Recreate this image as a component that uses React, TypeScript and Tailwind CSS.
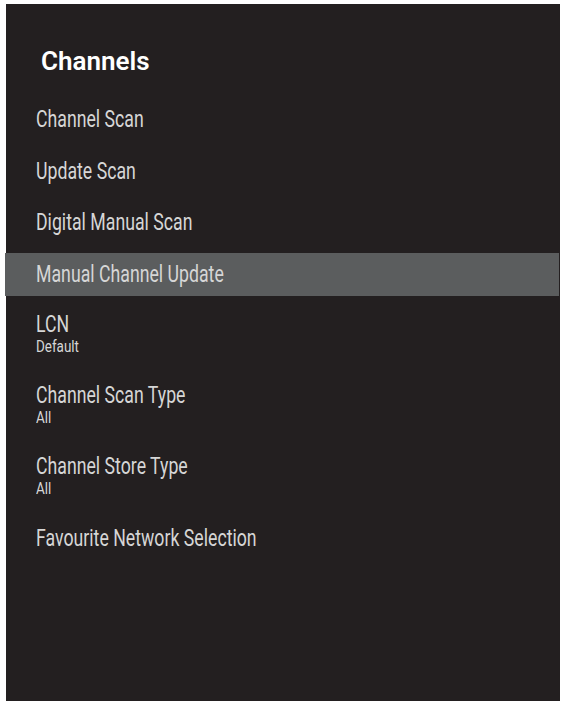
import React from 'react'

type Item = { label: string; value?: string }

const items: Item[] = [
  { label: 'Channel Scan' },
  { label: 'Update Scan' },
  { label: 'Digital Manual Scan' },
  { label: 'Manual Channel Update' },
  { label: 'LCN', value: 'Default' },
  { label: 'Channel Scan Type', value: 'All' },
  { label: 'Channel Store Type', value: 'All' },
  { label: 'Favourite Network Selection' },
]

const SELECTED = 3

// 細身の書体が無いので Roboto を横方向に縮める
const Label = ({ children, small }: { children: React.ReactNode; small?: boolean }) => (
  <span
    className={`inline-block origin-left whitespace-nowrap font-['Roboto',sans-serif] ${
      small ? 'text-[16px] leading-[18px] scale-x-[0.84]' : 'text-[23px] leading-[26px] scale-x-[0.77]'
    }`}
  >
    {children}
  </span>
)

export default function App() {
  return (
    <div className="w-[565px] h-[706px] bg-white pt-[4px] pl-[6px]">
      <div className="w-[554px] h-[697px] bg-[#231f20] flex flex-col">
        {/* 見出し */}
        <div className="pl-[35px] pt-[42px] h-[94.5px]">
          <h1 className="text-[26px] leading-[30px] font-semibold text-white font-['Roboto',sans-serif]">
            Channels
          </h1>
        </div>

        {/* メニュー */}
        <ul className="flex flex-col gap-[8.5px]">
          {items.map((item, i) =>
            item.value ? (
              <li key={item.label} className="h-[62.5px] pl-[30px] pt-[7.5px] text-[#d6d6d6] flex flex-col">
                <Label>{item.label}</Label>
                <Label small>{item.value}</Label>
              </li>
            ) : (
              <li
                key={item.label}
                className={`h-[43px] pl-[30px] flex items-center text-[#d6d6d6] ${
                  i === SELECTED ? 'bg-[#5b5d5e] -ml-[1px] pl-[31px] mr-[1px]' : ''
                }`}
              >
                <Label>{item.label}</Label>
              </li>
            )
          )}
        </ul>
      </div>
    </div>
  )
}
